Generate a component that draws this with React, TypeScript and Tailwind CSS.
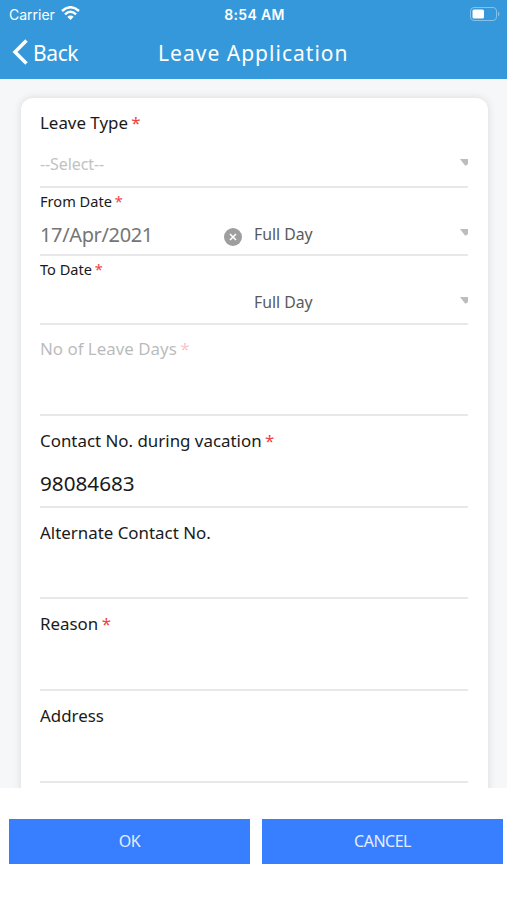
import React from 'react';

interface LabelProps {
  text: string;
  required?: boolean;
}

interface FieldProps extends LabelProps {
  value?: string;
  disabled?: boolean;
}

const Label: React.FC<LabelProps> = ({ text, required }) => (
  <>
    {text}
    {required && <span className="-ml-px text-[#f04141]"> *</span>}
  </>
);

const SelectArrow: React.FC = () => (
  <svg className="mb-[3px] h-[7px] w-2 shrink-0" viewBox="0 0 8 7">
    <path d="M0 0H8V5L6 6.500H5Z" fill="#bdbdbd" />
  </svg>
);

const Field: React.FC<FieldProps> = ({ text, required, value, disabled }) => (
  <div className="flex h-[91.6px] shrink-0 flex-col border-b-2 border-[#e8e8e8] pt-[13.8px]">
    <label className={`h-[22px] text-[16.9px] leading-[22px] ${disabled ? 'opacity-30' : ''}`}>
      <Label text={text} required={required} />
    </label>
    <div className="mt-[17px] h-7 text-[20.7px] leading-7">{value}</div>
  </div>
);

const DateField: React.FC<FieldProps> = ({ text, required, value }) => (
  <div className="h-[68.3px] shrink-0 border-b-2 border-[#e8e8e8] pt-[2.5px]">
    <label className="block h-5 text-[14.6px] leading-5">
      <Label text={text} required={required} />
    </label>
    <div className="mt-[9.500px] flex h-7 items-center">
      <span className="w-[184px] pt-px text-[20px] leading-7 tracking-[-0.36px] text-[#757575]">{value}</span>
      <span className="flex w-[30px]">
        {value && (
          <svg className="mt-1.5 h-[18px] w-[18px]" viewBox="0 0 18 18">
            <circle cx="9" cy="9" r="9" fill="#9e9e9e" />
            <path d="M6 6L12 12M12 6L6 12" stroke="#fff" strokeWidth="1.6" />
          </svg>
        )}
      </span>
      <span className="flex-1 text-[15.8px] leading-6 text-[#595959]">Full Day</span>
      <SelectArrow />
    </div>
  </div>
);

const StatusBar: React.FC = () => (
  <div className="grid h-7 grid-cols-3 items-center pr-[7px] pl-[9px] font-[Inter,sans-serif] text-[14px]">
    <div className="flex items-center gap-1.5">
      <span>Carrier</span>
      <svg className="mb-0.5 h-[14px] w-[19px]" viewBox="0 0 19 14" fill="none" stroke="#fff" strokeWidth="2.5">
        <path d="M1 5Q9.500 -2.500 18 5" />
        <path d="M4 8.300Q9.500 3.300 15 8.300" />
        <path d="M9.500 14L6.300 10.800Q9.500 8.200 12.700 10.800Z" fill="#fff" stroke="none" />
      </svg>
    </div>
    <span className="text-center font-semibold tracking-[0.3px]">8:54 AM</span>
    <svg className="mb-px h-[14px] w-[30px] justify-self-end" viewBox="0 0 30 14">
      <rect x="0.500" y="0.500" width="26" height="13" rx="3.500" fill="none" stroke="#86c1ea" />
      <rect x="2.500" y="2.500" width="11.500" height="9" rx="1.500" fill="#fff" />
      <path d="M28 4.500Q31 7 28 9.500Z" fill="#86c1ea" />
    </svg>
  </div>
);

const App: React.FC = () => {
  return (
    <div className="flex h-[900px] w-[507px] flex-col overflow-hidden bg-white font-['Noto_Sans',sans-serif] text-[#1a1a1a]">
      <header className="h-[79px] shrink-0 bg-[#3498db] text-white">
        <StatusBar />
        <div className="grid h-[49px] grid-cols-[158px_1fr_158px] items-center">
          <button type="button" className="flex items-center gap-[5px] pl-3 text-[21px] leading-7 tracking-[-0.4px]">
            <svg className="mb-0.5 h-[26px] w-4" viewBox="0 0 16 26" fill="none" stroke="#fff" strokeWidth="3.500">
              <path d="M14.500 1.500L3 13L14.500 24.500" />
            </svg>
            Back
          </button>
          <h1 className="text-[21px] leading-7 tracking-[1.02px] whitespace-nowrap">Leave Application</h1>
        </div>
      </header>

      <main className="h-[709px] shrink-0 overflow-hidden bg-[#f6f7f9] pt-[19px] pr-[19px] pl-[21px]">
        <form className="flex h-[720px] flex-col rounded-t-xl bg-white pr-5 pl-[19px] shadow-[0_0_8px_rgba(0,0,0,0.12)]">
          <div className="h-[90px] shrink-0 border-b-2 border-[#e8e8e8] pt-3.5">
            <label className="block h-[22px] text-[16.9px] leading-[22px]">
              <Label text="Leave Type" required />
            </label>
            <div className="mt-4 flex h-7 items-center justify-between">
              <span className="text-[16px] tracking-[-0.1px] text-[#c2c2c2]">--Select--</span>
              <SelectArrow />
            </div>
          </div>
          <DateField text="From Date" required value="17/Apr/2021" />
          <DateField text="To Date" required />
          <Field text="No of Leave Days" required disabled />
          <Field text="Contact No. during vacation" required value="98084683" />
          <Field text="Alternate Contact No." />
          <Field text="Reason" required />
          <Field text="Address" />
        </form>
      </main>

      <footer className="flex gap-3 pt-[31px] pr-1 pl-[9px]">
        <button type="button" className="h-[45px] flex-1 bg-[#387fff] pb-px text-[16px] tracking-[-0.5px] text-[#e3edff]">
          OK
        </button>
        <button type="button" className="h-[45px] flex-1 bg-[#387fff] pb-px text-[16px] tracking-[-0.5px] text-[#e3edff]">
          CANCEL
        </button>
      </footer>
    </div>
  );
};

export default App;
